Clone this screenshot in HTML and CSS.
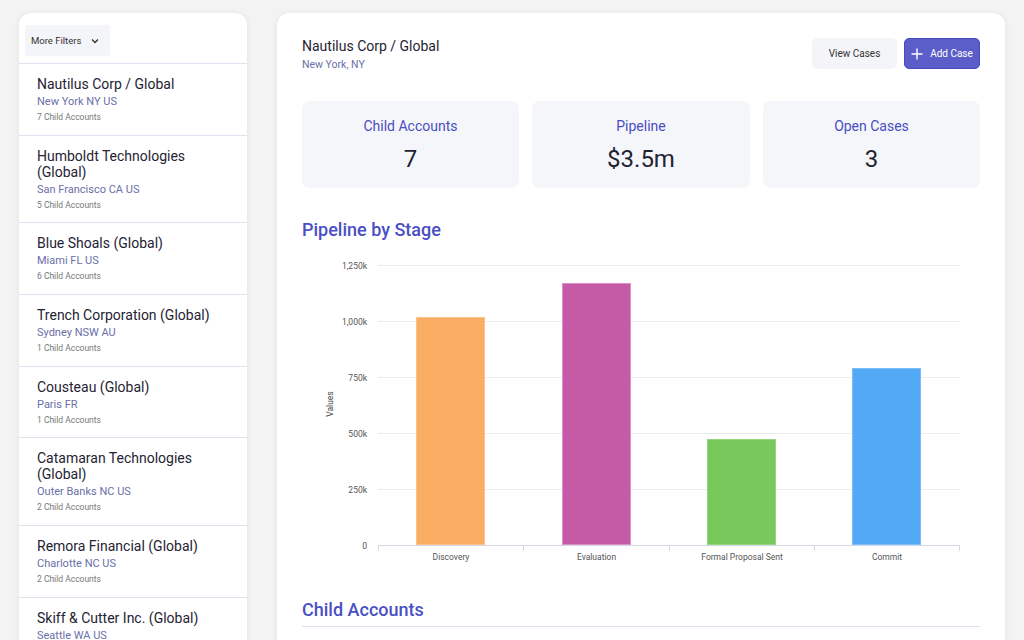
FILE: index.html
```html
<!DOCTYPE html>
<html>
<head>
<meta charset="utf-8">
<link rel="stylesheet" href="styles.css">
</head>
<body>
<div class="app">
  <aside class="sidebar">
    <div class="filters">
      <button class="filter-btn">More Filters
        <svg class="chev" width="8" height="6" viewBox="0 0 8 6"><path d="M1 1.5 L4 4.5 L7 1.5" fill="none" stroke="#333" stroke-width="1.3"/></svg>
      </button>
    </div>
    <ul class="accounts">
      <li class="account"><div class="name">Nautilus Corp / Global</div><div class="loc">New York NY US</div><div class="count">7 Child Accounts</div></li>
      <li class="account"><div class="name">Humboldt Technologies (Global)</div><div class="loc">San Francisco CA US</div><div class="count">5 Child Accounts</div></li>
      <li class="account"><div class="name">Blue Shoals (Global)</div><div class="loc">Miami FL US</div><div class="count">6 Child Accounts</div></li>
      <li class="account"><div class="name">Trench Corporation (Global)</div><div class="loc">Sydney NSW AU</div><div class="count">1 Child Accounts</div></li>
      <li class="account"><div class="name">Cousteau (Global)</div><div class="loc">Paris FR</div><div class="count">1 Child Accounts</div></li>
      <li class="account"><div class="name">Catamaran Technologies (Global)</div><div class="loc">Outer Banks NC US</div><div class="count">2 Child Accounts</div></li>
      <li class="account"><div class="name">Remora Financial (Global)</div><div class="loc">Charlotte NC US</div><div class="count">2 Child Accounts</div></li>
      <li class="account"><div class="name">Skiff &amp; Cutter Inc. (Global)</div><div class="loc">Seattle WA US</div><div class="count">3 Child Accounts</div></li>
    </ul>
  </aside>
  <main class="main">
    <header class="head">
      <div class="head-text">
        <div class="title">Nautilus Corp / Global</div>
        <div class="subtitle">New York, NY</div>
      </div>
      <div class="actions">
        <button class="btn btn-light">View Cases</button>
        <button class="btn btn-primary">
          <svg width="12" height="12" viewBox="0 0 12 12"><path d="M6 0.5 V11.5 M0.5 6 H11.5" stroke="#fff" stroke-width="1.4" fill="none"/></svg>
          Add Case
        </button>
      </div>
    </header>
    <section class="stats">
      <div class="stat"><div class="stat-label">Child Accounts</div><div class="stat-value">7</div></div>
      <div class="stat"><div class="stat-label">Pipeline</div><div class="stat-value">$3.5m</div></div>
      <div class="stat"><div class="stat-label">Open Cases</div><div class="stat-value">3</div></div>
    </section>
    <h2 class="section-title">Pipeline by Stage</h2>
    <svg class="chart" width="678" height="320" viewBox="0 0 678 320">
      <g stroke="#ececf0" stroke-width="1">
        <line x1="76" y1="15.5" x2="658" y2="15.5"/>
        <line x1="76" y1="71.5" x2="658" y2="71.5"/>
        <line x1="76" y1="127.5" x2="658" y2="127.5"/>
        <line x1="76" y1="183.5" x2="658" y2="183.5"/>
        <line x1="76" y1="239.5" x2="658" y2="239.5"/>
      </g>
      <g class="ylab" text-anchor="end">
        <text x="65" y="18.5">1,250k</text>
        <text x="65" y="74.5">1,000k</text>
        <text x="65" y="130.5">750k</text>
        <text x="65" y="186.5">500k</text>
        <text x="65" y="242.5">250k</text>
        <text x="65" y="298.5">0</text>
      </g>
      <text class="ytitle" transform="translate(31 154) rotate(-90)" text-anchor="middle">Values</text>
      <rect x="114.5" y="67.5" width="68" height="227" fill="#fbad63" stroke="#fdc28c"/>
      <rect x="260.5" y="33.5" width="68" height="261" fill="#c55aa6" stroke="#df8fc8"/>
      <rect x="405.5" y="189.5" width="68" height="105" fill="#77c95c" stroke="#93d67c"/>
      <rect x="550.5" y="118.5" width="68" height="176" fill="#52a9f5" stroke="#7bbdf7"/>
      <g stroke="#d3d7e6" stroke-width="1">
        <line x1="76" y1="295.5" x2="658" y2="295.5"/>
        <line x1="76.5" y1="295" x2="76.5" y2="301"/>
        <line x1="221.5" y1="295" x2="221.5" y2="301"/>
        <line x1="367.5" y1="295" x2="367.5" y2="301"/>
        <line x1="512.5" y1="295" x2="512.5" y2="301"/>
        <line x1="657.5" y1="295" x2="657.5" y2="301"/>
      </g>
      <g class="xlab" text-anchor="middle">
        <text x="149" y="309.5">Discovery</text>
        <text x="294.5" y="309.5">Evaluation</text>
        <text x="440" y="309.5">Formal Proposal Sent</text>
        <text x="585" y="309.5">Commit</text>
      </g>
    </svg>
    <h2 class="section-title child-title">Child Accounts</h2>
  </main>
</div>
</body>
</html>
```
FILE: styles.css
```css
* { box-sizing: border-box; }
html, body { margin: 0; padding: 0; }
body {
  background: #f3f3f4;
  font-family: Roboto, "Noto Sans", Arial, sans-serif;
  width: 1024px;
  height: 640px;
  overflow: hidden;
  color: #1f2333;
}
.app {
  display: flex;
  gap: 30px;
  padding: 13px 19px 0 19px;
  align-items: flex-start;
}
.sidebar {
  width: 228px;
  flex: none;
  background: #fff;
  border-radius: 12px 12px 0 0;
  box-shadow: 0 1px 6px rgba(0, 0, 0, 0.08);
  min-height: 700px;
}
.filters {
  padding: 12px 6px 7px;
  border-bottom: 1px solid #dfe2ee;
}
.filter-btn {
  display: flex;
  align-items: center;
  gap: 8px;
  height: 31px;
  width: 85px;
  padding: 0 0 0 6px;
  border: none;
  border-radius: 3px;
  background: #f4f5f9;
  font-family: inherit;
  font-size: 9.5px;
  color: #333;
}
.chev { margin-left: 2px; }
.accounts {
  list-style: none;
  margin: 0;
  padding: 0;
}
.account {
  padding: 12px 10px 11.7px 18px;
  border-bottom: 1px solid #dfe2ee;
}
.name {
  font-size: 14px;
  line-height: 16px;
  color: #1f2333;
}
.loc {
  font-size: 11px;
  line-height: 14px;
  margin-top: 3px;
  color: #6a6fa8;
}
.count {
  font-size: 8.5px;
  line-height: 12px;
  margin-top: 2px;
  color: #777;
}
.main {
  width: 728px;
  flex: none;
  background: #fff;
  border-radius: 12px 12px 0 0;
  box-shadow: 0 1px 6px rgba(0, 0, 0, 0.08);
  padding: 25px 25px 0;
  min-height: 700px;
}
.head {
  display: flex;
  justify-content: space-between;
  align-items: flex-start;
}
.title {
  font-size: 14px;
  line-height: 17px;
  color: #1f2333;
}
.subtitle {
  font-size: 10.5px;
  line-height: 14px;
  margin-top: 3px;
  color: #6a6fa8;
}
.actions {
  display: flex;
  gap: 7px;
}
.btn {
  height: 31px;
  border-radius: 5px;
  font-family: inherit;
  font-size: 10px;
  display: flex;
  align-items: center;
  justify-content: center;
}
.btn-light {
  width: 85px;
  border: none;
  background: #f4f5f9;
  color: #333;
}
.btn-primary {
  width: 76px;
  background: #5b5ec8;
  border: 1px solid #4a4db9;
  color: #fff;
  gap: 7px;
  padding: 0;
}
.stats {
  display: grid;
  grid-template-columns: 217px 218px 217px;
  gap: 13px;
  margin-top: 29px;
}
.stat {
  background: #f5f6fa;
  border-radius: 8px;
  height: 87px;
  padding-top: 17px;
  text-align: center;
}
.stat-label {
  font-size: 14px;
  line-height: 17px;
  color: #4a4dc0;
}
.stat-value {
  font-size: 24px;
  line-height: 28px;
  margin-top: 10px;
  color: #1f2333;
}
.section-title {
  margin: 31px 0 0;
  font-size: 18px;
  line-height: 22px;
  font-weight: 500;
  color: #4a4fc4;
}
.chart {
  display: block;
  margin-top: 9px;
}
.ylab text, .xlab text {
  font-family: Roboto, "Noto Sans", Arial, sans-serif;
  font-size: 8.5px;
  fill: #555;
}
.ytitle {
  font-family: Roboto, "Noto Sans", Arial, sans-serif;
  font-size: 8.5px;
  fill: #444;
}
.child-title {
  margin-top: 29px;
  padding-bottom: 5px;
  border-bottom: 1px solid #dfe2ee;
}
```
